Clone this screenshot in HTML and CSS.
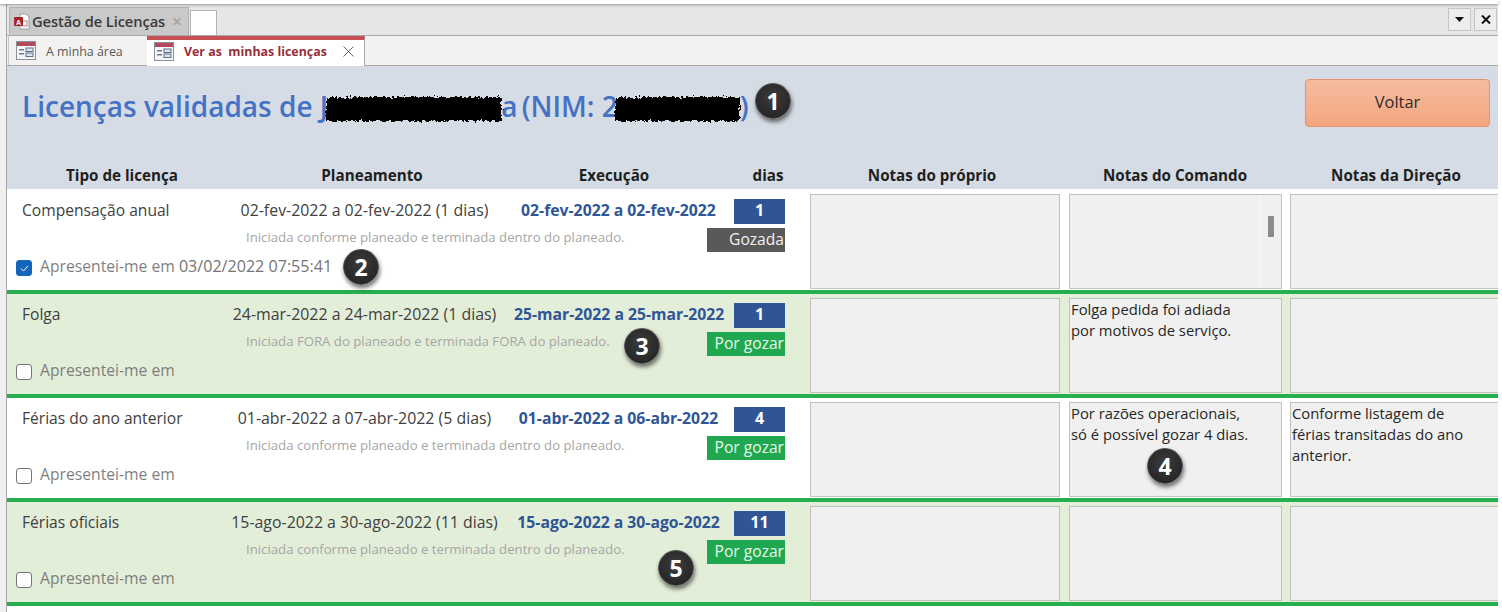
FILE: index.html
```html
<!DOCTYPE html>
<html lang="pt">
<head>
<meta charset="utf-8">
<title>Gestão de Licenças</title>
<link rel="stylesheet" href="styles.css">
</head>
<body>
<svg class="defs" width="0" height="0" aria-hidden="true">
  <filter id="scribble" x="-5%" y="-25%" width="110%" height="150%">
    <feTurbulence type="fractalNoise" baseFrequency="0.35" numOctaves="2" seed="4"/>
    <feDisplacementMap in="SourceGraphic" scale="7"/>
    <feGaussianBlur stdDeviation="0.7"/>
  </filter>
  <symbol id="form" viewBox="0 0 20 19">
    <rect x="0.5" y="0.5" width="19" height="18" fill="#f4f6fa" stroke="#8d8f9a"/>
    <rect x="1" y="1" width="18" height="4" fill="#b5495c"/>
    <rect x="3" y="8" width="5" height="1.5" fill="#6c7a90"/>
    <rect x="3" y="12" width="5" height="1.5" fill="#6c7a90"/>
    <rect x="10" y="7" width="7" height="3.5" fill="#dfe5ee" stroke="#5f7087" stroke-width="1"/>
    <rect x="10" y="12" width="7" height="3.5" fill="#dfe5ee" stroke="#5f7087" stroke-width="1"/>
  </symbol>
</svg>
<div class="app">
  <div class="top-edge"></div>
  <div class="doc-bar">
    <div class="doc-tab">
      <svg class="access-icon" width="17" height="17" viewBox="0 0 17 17"><path d="M7 1h6l3 3v12H7z" fill="#fff" stroke="#9a9a9a"/><rect x="9" y="8" width="5" height="5" fill="#fff" stroke="#b08080"/><rect x="1" y="4" width="9" height="9" rx="1" fill="#a4262c"/><text x="5.5" y="11.5" class="access-a">A</text></svg>
      <span class="doc-title">Gestão de Licenças</span>
      <span class="doc-x">✕</span>
    </div>
    <div class="doc-blank"></div>
    <div class="win-btns">
      <button class="win-btn"><svg width="9" height="5" viewBox="0 0 9 5"><path d="M0 0h9L4.500 5z" fill="#111"/></svg></button>
      <button class="win-btn"><svg width="10" height="9" viewBox="0 0 10 9"><path d="M1 .5l8 8M9 .500l-8 8" stroke="#111" stroke-width="2"/></svg></button>
    </div>
  </div>
  <div class="tab-bar">
    <div class="tab">
      <svg class="form-icon" width="20" height="19"><use href="#form"/></svg>
      <span>A minha área</span>
    </div>
    <div class="tab active">
      <svg class="form-icon" width="20" height="19"><use href="#form"/></svg>
      <span class="tab-label">Ver as&nbsp; minhas licenças</span>
      <svg class="tab-close" width="11" height="11" viewBox="0 0 11 11"><path d="M.5.500l10 10M10.500.500l-10 10" stroke="#666" stroke-width="1"/></svg>
    </div>
  </div>
  <div class="form">
    <header class="form-head">
      <div class="title-row">
        <h1 class="title">Licenças validadas de J<span class="blob blob-name"></span><span class="tight">a</span> (NIM: 2<span class="blob blob-nim"></span>)</h1>
        <button class="voltar">Voltar</button>
      </div>
      <div class="cols">
        <div>Tipo de licença</div>
        <div>Planeamento</div>
        <div>Execução</div>
        <div>dias</div>
        <div>Notas do próprio</div>
        <div>Notas do Comando</div>
        <div>Notas da Direção</div>
      </div>
    </header>

    <section class="row first">
      <div class="info">
        <div class="line1">
          <div class="name">Compensação anual</div>
          <div class="plan">02-fev-2022 a 02-fev-2022 (1 dias)</div>
          <div class="exec">02-fev-2022 a 02-fev-2022</div>
          <div class="days">1</div>
        </div>
        <div class="line2">
          <div class="hint">Iniciada conforme planeado e terminada dentro do planeado.</div>
          <div class="status done">Gozada</div>
        </div>
        <div class="line3">
          <span class="check on"><svg width="9" height="7" viewBox="0 0 9 7"><path d="M1 3.500l2.500 2.500L8 1" fill="none" stroke="#fff" stroke-width="1"/></svg></span>
          <span class="check-label">Apresentei-me em <span class="stamp">03/02/2022 07:55:41</span></span>
        </div>
      </div>
      <div class="note n1"></div>
      <div class="note n2 scroll"><span class="thumb"></span></div>
      <div class="note n3"></div>
    </section>

    <section class="row alt">
      <div class="info">
        <div class="line1">
          <div class="name">Folga</div>
          <div class="plan">24-mar-2022 a 24-mar-2022 (1 dias)</div>
          <div class="exec">25-mar-2022 a 25-mar-2022</div>
          <div class="days">1</div>
        </div>
        <div class="line2">
          <div class="hint">Iniciada FORA do planeado e terminada FORA do planeado.</div>
          <div class="status">Por gozar</div>
        </div>
        <div class="line3">
          <span class="check"></span>
          <span class="check-label">Apresentei-me em</span>
        </div>
      </div>
      <div class="note n1"></div>
      <div class="note n2">Folga pedida foi adiada<br>por motivos de serviço.</div>
      <div class="note n3"></div>
    </section>

    <section class="row">
      <div class="info">
        <div class="line1">
          <div class="name">Férias do ano anterior</div>
          <div class="plan">01-abr-2022 a 07-abr-2022 (5 dias)</div>
          <div class="exec">01-abr-2022 a 06-abr-2022</div>
          <div class="days">4</div>
        </div>
        <div class="line2">
          <div class="hint">Iniciada conforme planeado e terminada dentro do planeado.</div>
          <div class="status">Por gozar</div>
        </div>
        <div class="line3">
          <span class="check"></span>
          <span class="check-label">Apresentei-me em</span>
        </div>
      </div>
      <div class="note n1"></div>
      <div class="note n2">Por razões operacionais,<br>só é possível gozar 4 dias.</div>
      <div class="note n3">Conforme listagem de<br>férias transitadas do ano<br>anterior.</div>
    </section>

    <section class="row alt">
      <div class="info">
        <div class="line1">
          <div class="name">Férias oficiais</div>
          <div class="plan">15-ago-2022 a 30-ago-2022 (11 dias)</div>
          <div class="exec">15-ago-2022 a 30-ago-2022</div>
          <div class="days">11</div>
        </div>
        <div class="line2">
          <div class="hint">Iniciada conforme planeado e terminada dentro do planeado.</div>
          <div class="status">Por gozar</div>
        </div>
        <div class="line3">
          <span class="check"></span>
          <span class="check-label">Apresentei-me em</span>
        </div>
      </div>
      <div class="note n1"></div>
      <div class="note n2"></div>
      <div class="note n3"></div>
    </section>
  </div>

  <span class="badge b1">1</span>
  <span class="badge b2">2</span>
  <span class="badge b3">3</span>
  <span class="badge b4">4</span>
  <span class="badge b5">5</span>
</div>
</body>
</html>
```
FILE: styles.css
```css
* { box-sizing: border-box; }
html, body { margin: 0; padding: 0; }
body {
  width: 1502px;
  height: 612px;
  overflow: hidden;
  background: #fff;
  font-family: "Open Sans", "Noto Sans", sans-serif;
  color: #404040;
}
.defs { position: absolute; }
.app {
  position: relative;
  width: 1498px;
  height: 612px;
  padding-left: 7px;
  background: linear-gradient(90deg, #f0f0f0 0, #f0f0f0 6px, #a6a6a6 6px, #a6a6a6 7px, #fff 7px);
}
.top-edge {
  height: 4px;
  margin-left: -7px;
  background: #fff;
  box-shadow: 0 1px 3px rgba(0, 0, 0, .35);
  position: relative;
}

/* document bar */
.doc-bar {
  height: 32px;
  display: flex;
  align-items: flex-end;
  padding-left: 2px;
  background: #e6e6e6;
  border-bottom: 1px solid #a9a9a9;
}
.doc-tab {
  width: 180px;
  height: 28px;
  display: flex;
  align-items: center;
  padding-left: 3px;
  background: #c9c9c9;
  border: 1px solid #b3b3b3;
  border-bottom: 0;
}
.access-icon { flex: none; }
.access-a { font: 700 7px "Liberation Sans", sans-serif; fill: #fff; text-anchor: middle; }
.doc-title {
  margin-left: 2px;
  padding-bottom: 2px;
  font-size: 14.700px;
  font-weight: 600;
  letter-spacing: -.1px;
  color: #3a3a3a;
  white-space: nowrap;
}
.doc-x { margin-left: 7px; font-size: 12px; font-weight: 700; color: #a5a5a5; }
.doc-blank {
  width: 27px;
  height: 25px;
  margin-left: 1px;
  background: #fff;
  border: 1px solid #b3b3b3;
  border-bottom: 0;
}
.win-btns {
  display: flex;
  gap: 3px;
  margin-left: auto;
  margin-right: 1px;
  align-self: flex-start;
  margin-top: 4px;
}
.win-btn {
  width: 23px;
  height: 23px;
  padding: 0;
  display: flex;
  align-items: center;
  justify-content: center;
  background: #ededed;
  border: 1px solid #c4c4c4;
}

/* tabs */
.tab-bar {
  height: 30px;
  display: flex;
  padding-left: 1px;
  background: #f3f2f1;
  border-bottom: 1px solid #a9a9a9;
}
.tab {
  width: 139px;
  display: flex;
  align-items: center;
  padding-left: 7px;
  font-size: 12.400px;
  color: #595959;
  border-left: 1px solid #c9c9c9;
}
.tab span { margin-left: 10px; padding-top: 2px; white-space: nowrap; }
.form-icon { flex: none; }
.tab.active {
  width: 218px;
  height: 30px;
  padding-left: 7px;
  background: #fff;
  border-top: 4px solid #c75055;
  border-right: 1px solid #a9a9a9;
  border-left: 0;
}
.tab.active .form-icon { margin-bottom: 3px; }
.tab .tab-label { margin-left: 10px; padding: 0 0 3px; font-weight: 700; font-size: 12.400px; color: #973038; }
.tab-close { margin: 0 0 3px 16px; flex: none; }

/* form */
.form { width: 1491px; }
.form-head { height: 123px; background: #d6dce5; }
.title-row {
  height: 94px;
  display: flex;
  justify-content: space-between;
  padding: 13px 8px 0 15px;
}
.title {
  margin: 3px 0 0;
  font-size: 28px;
  line-height: 48px;
  font-weight: 600;
  color: #4472c4;
  white-space: nowrap;
}
.blob {
  display: inline-block;
  height: 24px;
  vertical-align: -4px;
  background: #000;
  filter: url(#scribble);
}
.blob-name { width: 175px; margin-left: -2px; }
.tight { margin-right: -3px; }
.blob-nim { width: 125px; margin-left: -3px; margin-right: 0; }
.voltar {
  width: 185px;
  height: 48px;
  padding: 0 0 3px;
  background: linear-gradient(#f6bb9f, #f4a680);
  border: 1px solid #e2946c;
  border-radius: 4px;
  font: 16.400px "Open Sans", sans-serif;
  color: #2b2b2b;
}
.cols {
  height: 29px;
  display: grid;
  grid-template-columns: 230px 270px 214px 94px 234px 252px 190px;
  align-items: center;
  text-align: center;
  font-size: 15.200px;
  font-weight: 700;
  color: #1f1f1f;
}

.row {
  height: 104px;
  display: flex;
  align-items: flex-start;
  padding-top: 4px;
  border-bottom: 4px solid #27ae4f;
  background: #fff;
}
.row.first { height: 105px; padding-top: 5px; }
.row.alt { background: #e3eed9; }

.info {
  width: 803px;
  flex: none;
  padding-top: 5px;
}
.line1 {
  height: 25px;
  display: grid;
  grid-template-columns: 208px 299px 209px 11px 51px;
  align-items: center;
  font-size: 15.600px;
  white-space: nowrap;
}
.name, .plan, .exec { padding-bottom: 3px; }
.name { padding-left: 15px; }
.plan, .exec { text-align: center; }
.plan { font-size: 15.900px; }
.exec { font-weight: 700; color: #2f5597; font-size: 15.750px; }
.days {
  grid-column: 5;
  height: 25px;
  line-height: 23px;
  text-align: center;
  background: #2f5597;
  color: #fff;
  font-weight: 700;
  font-size: 16px;
}
.line2 {
  height: 24px;
  margin-top: 4px;
  display: flex;
  justify-content: space-between;
  padding: 0 25px 0 239px;
}
.hint { font-size: 13.200px; line-height: 19px; color: #a6a6a6; white-space: nowrap; }
.status {
  width: 78px;
  height: 24px;
  line-height: 23px;
  text-align: right;
  padding-right: 1px;
  background: #1fa84f;
  color: #e9f7ee;
  font-size: 15.600px;
}
.status.done { background: #595959; color: #f2f2f2; }
.line3 {
  display: flex;
  align-items: center;
  height: 16px;
  margin-top: 8px;
  padding-left: 9px;
}
.check {
  width: 16px;
  height: 16px;
  flex: none;
  display: flex;
  align-items: center;
  justify-content: center;
  background: #fff;
  border: 1px solid #777;
  border-radius: 3px;
}
.check.on { background: #1265b8; border-color: #1265b8; }
.check-label { margin: 0 0 4px 8px; font-size: 15.700px; color: #7f7f7f; white-space: nowrap; }
.stamp { color: #757575; font-size: 16.100px; }

.note {
  position: relative;
  flex: none;
  height: 95px;
  padding: 0 1px;
  background: #f0f0f0;
  border: 1px solid #bfc2bd;
  font-size: 14.800px;
  line-height: 21px;
  color: #262626;
  white-space: nowrap;
}
.n1 { width: 250px; }
.n2 { width: 213px; margin-left: 9px; }
.n3 { width: 208px; margin-left: 8px; border-right: 0; }
.scroll::after {
  content: "";
  position: absolute;
  top: 0;
  bottom: 0;
  right: 20px;
  width: 1px;
  background: #fafafa;
}
.thumb {
  position: absolute;
  top: 21px;
  right: 7px;
  width: 6px;
  height: 21px;
  background: #8c8c8c;
}

/* numbered callouts placed over the screenshot */
.badge {
  position: absolute;
  width: 36px;
  height: 36px;
  border-radius: 50%;
  display: flex;
  align-items: center;
  justify-content: center;
  background: radial-gradient(circle at 50% 40%, #3c3c3c, #1f1f1f);
  border: 1px solid #555;
  box-shadow: 1px 3px 4px rgba(0, 0, 0, .55);
  color: #fff;
  font: 700 23px "Open Sans", sans-serif;
}
.b1 { left: 755px; top: 83px; }
.b2 { left: 343px; top: 249px; }
.b3 { left: 624px; top: 328px; }
.b4 { left: 1147px; top: 448px; }
.b5 { left: 658px; top: 550px; }
```
